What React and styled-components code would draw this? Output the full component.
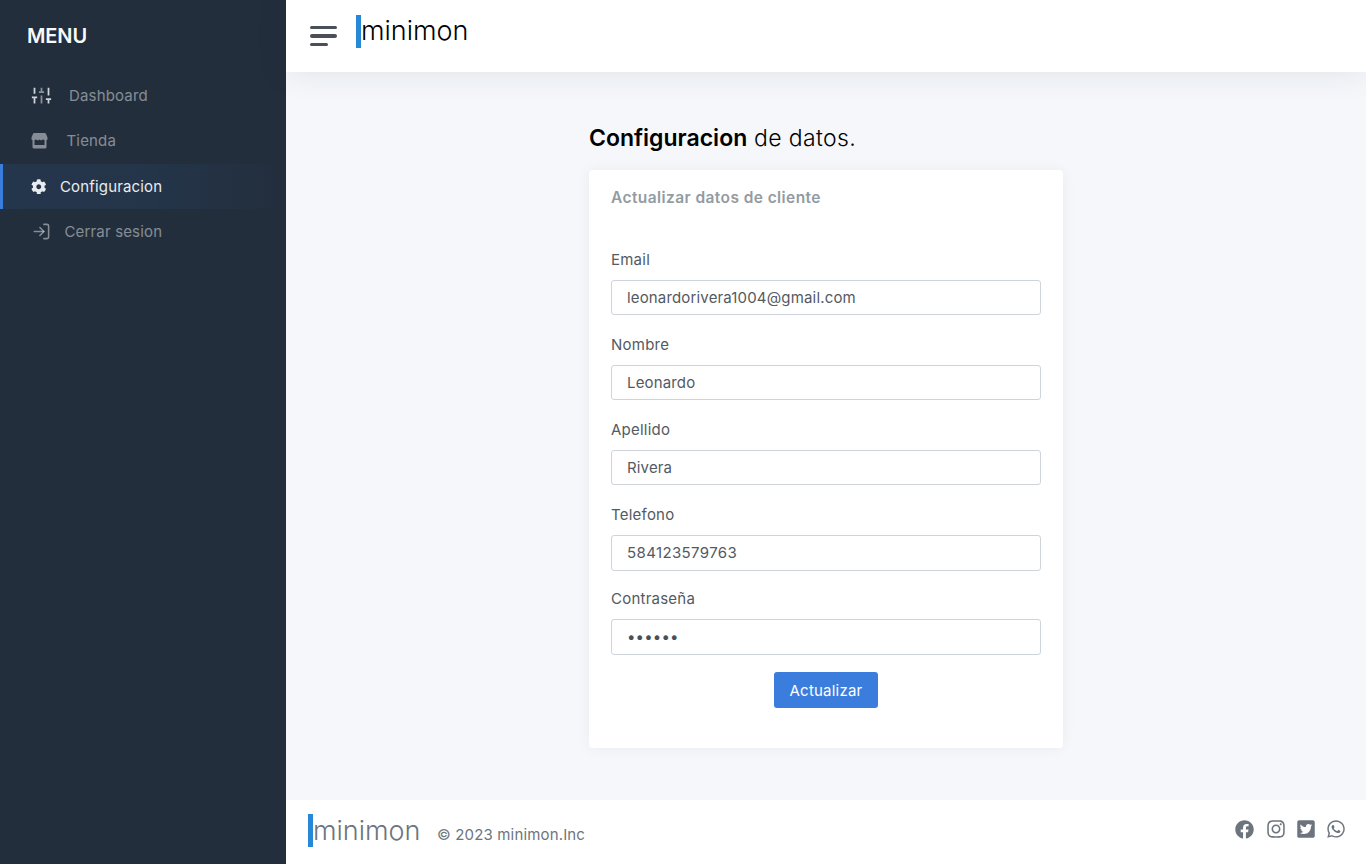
import React from "react";
import styled, { createGlobalStyle } from "styled-components";
import { FiLogIn } from "react-icons/fi";
import { FaCog, FaFacebook, FaInstagram, FaTwitterSquare, FaWhatsapp } from "react-icons/fa";

const GlobalStyle = createGlobalStyle`
  *, *::before, *::after { box-sizing: border-box; }
  body {
    margin: 0;
    font-family: Inter, "Liberation Sans", sans-serif;
    font-size: 15px;
    line-height: 1.5;
    letter-spacing: 0.16px;
    color: #535a61;
    background: #f5f7fb;
  }
`;

const Page = styled.div`
  display: flex;
  height: 864px;
  overflow: hidden;
`;

const Sidebar = styled.nav`
  flex: 0 0 286px;
  background: #222e3c;
`;

const Brand = styled.div`
  padding: 21px 27px;
  font-size: 20px;
  line-height: 31px;
  font-weight: 600;
  letter-spacing: -0.1px;
  color: #f8f9fa;
`;

const NavLink = styled.a`
  display: flex;
  align-items: center;
  height: ${(p) => (p.$active ? 45 : 45.4)}px;
  padding-left: ${(p) => p.$inset}px;
  gap: ${(p) => p.$gap}px;
  border-left: 3px solid ${(p) => (p.$active ? "#3b7ddd" : "transparent")};
  background: ${(p) =>
    p.$active
      ? "linear-gradient(90deg, rgba(59,125,221,.1), rgba(59,125,221,.0875) 50%, transparent)"
      : "transparent"};
  color: ${(p) => (p.$active ? "#e9ecef" : "rgba(233,236,239,.5)")};
`;

const NavText = styled.span`
  padding-top: 1.2px;
`;

const Main = styled.main`
  flex: 1;
  display: flex;
  flex-direction: column;
`;

const Topbar = styled.header`
  display: flex;
  height: 72px;
  padding: 15px 24px;
  background: #fff;
  box-shadow: 0 0 32px 0 rgba(33, 37, 41, 0.1);
`;

const Hamburger = styled.span`
  display: flex;
  flex-direction: column;
  gap: 5px;
  width: 46px;
  padding-top: 11px;
`;

const Bar = styled.i`
  height: ${(p) => p.$h}px;
  width: ${(p) => p.$w}px;
  border-radius: 2px;
  background: #495057;
`;

const Logo = styled.span`
  height: 33px;
  border-left: 5px solid #2888d8;
  font-size: 27px;
  line-height: ${(p) => p.$line}px;
  font-weight: 300;
  letter-spacing: 0;
  color: ${(p) => p.$color};
`;

const Content = styled.section`
  flex: 1;
  width: 474px;
  margin-left: 303px;
  padding-top: 48px;
`;

const Title = styled.h1`
  margin: 0 0 14px;
  font-size: 23px;
  line-height: 37px;
  height: 36px;
  font-weight: 300;
  letter-spacing: 0.35px;
  color: #000;
  strong { font-weight: 600; letter-spacing: 0; }
`;

const Card = styled.form`
  height: 578px;
  padding: 16px 22px;
  border-radius: 4px;
  background: #fff;
  box-shadow: 0 0 14px 0 rgba(33, 37, 41, 0.05);
`;

const CardTitle = styled.h2`
  margin: 0 0 39px;
  font-size: 15.5px;
  line-height: 23px;
  font-weight: 600;
  letter-spacing: 0.42px;
  color: #939ba2;
`;

const Field = styled.label`
  display: block;
  height: 84.85px;
`;

const FieldName = styled.span`
  display: block;
  height: 32px;
  line-height: 23px;
  letter-spacing: 0.23px;
`;

const Input = styled.input`
  display: block;
  width: 100%;
  height: ${(p) => (p.type === "tel" ? 36 : 35.4)}px;
  padding: 0 15px ${(p) => (p.type === "password" ? 1 : 0)}px;
  border: 1px solid #ced4da;
  border-radius: 3px;
  background: #fff;
  color: ${(p) => (p.type === "password" ? "#495057" : "#535a61")};
  font: inherit;
  letter-spacing: ${(p) => (p.type === "tel" ? 0.38 : 0.16)}px;
`;

const Submit = styled.button`
  display: block;
  width: 104px;
  height: 36px;
  margin: 0 auto;
  padding: 2px 0 0;
  border: 0;
  border-radius: 3px;
  background: #3b7ddd;
  color: #fff;
  font: inherit;
  letter-spacing: 0.22px;
`;

const Footer = styled.footer`
  display: flex;
  height: 64px;
  padding: 14px 20.5px 14px 22px;
  background: #fff;
  color: #6c757d;
`;

const Copyright = styled.span`
  margin-left: 16.5px;
  padding-top: 9px;
  line-height: 23px;
`;

const Social = styled.div`
  display: flex;
  align-items: center;
  gap: 10px;
  height: 30px;
  margin-left: auto;
`;

const FacebookIcon = styled(FaFacebook)`
  margin-right: 1.7px;
`;

const SlidersIcon = () => (
  <svg width="21" height="21" viewBox="0 0 24 24" fill="none" stroke="#ced4da" strokeWidth="2">
    <path d="M4 21v-7M4 10V3M1 14h6M20 21v-5M20 12V3M17 16h6" />
    <path d="M12 21v-9M12 8V3M9 8h6" opacity=".6" />
  </svg>
);

const StoreIcon = () => (
  <svg width="19" height="18" viewBox="0 0 19 18" fill="currentColor">
    <path
      d="M4.500 1h10q1.200 0 1.700 1.200L17.500 5.500V7q0 1-1 1.300V15q0 1.500-1.500 1.500H4Q2.500 16.500 2.500 15V8.300Q1.500 8 1.500 7V5.500L2.800 2.200Q3.300 1 4.500 1zM4.500 8V13H14.500V8L13 7.600 11.500 8.200H10.500L9.500 7.600 8.500 8.200H7.500L6 7.600z"
      fillRule="evenodd"
    />
  </svg>
);

const fields = [
  ["Email", "leonardorivera1004@gmail.com"],
  ["Nombre", "Leonardo"],
  ["Apellido", "Rivera"],
  ["Telefono", "584123579763", "tel"],
  ["Contraseña", "123456", "password"],
];

export default function App() {
  return (
    <Page>
      <GlobalStyle />
      <Sidebar>
        <Brand>MENU</Brand>
        <NavLink $inset={28} $gap={17}><SlidersIcon /><NavText>Dashboard</NavText></NavLink>
        <NavLink $inset={27} $gap={17.5}><StoreIcon /><NavText>Tienda</NavText></NavLink>
        <NavLink $inset={27.5} $gap={14} $active><FaCog size={15.5} /><NavText>Configuracion</NavText></NavLink>
        <NavLink $inset={29} $gap={13.5}><FiLogIn size={19} /><NavText>Cerrar sesion</NavText></NavLink>
      </Sidebar>
      <Main>
        <Topbar>
          <Hamburger><Bar $h={3} $w={27} /><Bar $h={4} $w={27} /><Bar $h={3} $w={18} /></Hamburger>
          <Logo $color="#000" $line={32}>minimon</Logo>
        </Topbar>
        <Content>
          <Title><strong>Configuracion</strong> de datos.</Title>
          <Card>
            <CardTitle>Actualizar datos de cliente</CardTitle>
            {fields.map(([name, value, type = "text"]) => (
              <Field key={name}>
                <FieldName>{name}</FieldName>
                <Input type={type} defaultValue={value} />
              </Field>
            ))}
            <Submit type="button">Actualizar</Submit>
          </Card>
        </Content>
        <Footer>
          <Logo $color="#6c757d" $line={34}>minimon</Logo>
          <Copyright>© 2023 minimon.Inc</Copyright>
          <Social>
            <FacebookIcon size={19} /><FaInstagram size={20} /><FaTwitterSquare size={20} /><FaWhatsapp size={20} />
          </Social>
        </Footer>
      </Main>
    </Page>
  );
}
